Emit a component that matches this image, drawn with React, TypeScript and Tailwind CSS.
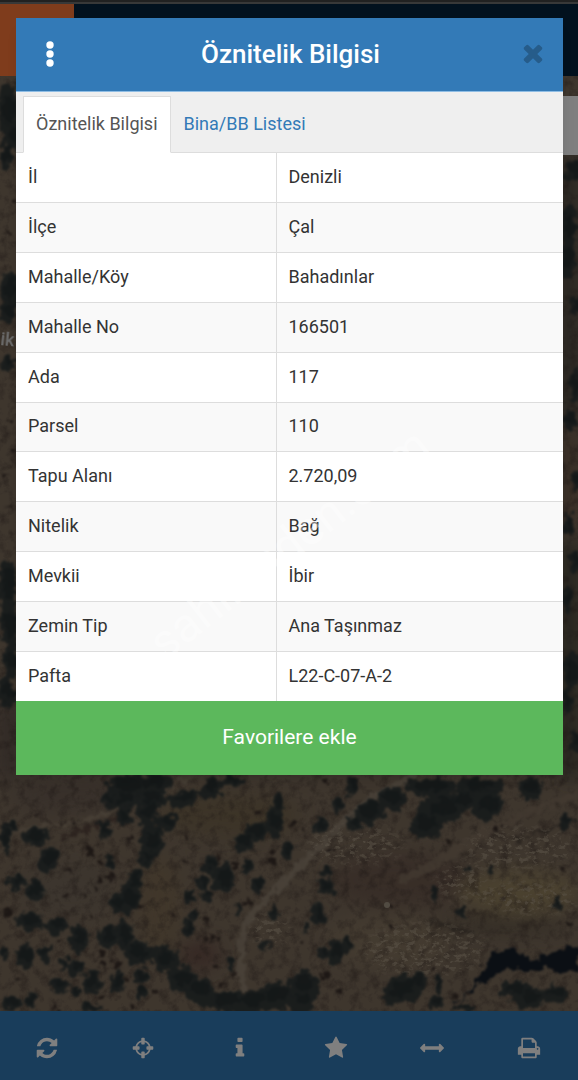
import React, { useState } from 'react';

const ROWS: [string, string][] = [
  ['İl', 'Denizli'],
  ['İlçe', 'Çal'],
  ['Mahalle/Köy', 'Bahadınlar'],
  ['Mahalle No', '166501'],
  ['Ada', '117'],
  ['Parsel', '110'],
  ['Tapu Alanı', '2.720,09'],
  ['Nitelik', 'Bağ'],
  ['Mevkii', 'İbir'],
  ['Zemin Tip', 'Ana Taşınmaz'],
  ['Pafta', 'L22-C-07-A-2'],
];

const TABS = ['Öznitelik Bilgisi', 'Bina/BB Listesi'];

const TOOLS = [
  {
    label: 'Yenile',
    d: 'M1639 1056q0 5-1 7-64 268-268 434.5t-478 166.5q-146 0-282.5-55t-243.5-157l-129 129q-19 19-45 19t-45-19-19-45v-448q0-26 19-45t45-19h448q26 0 45 19t19 45-19 45l-137 137q71 66 161 102t187 36q134 0 250-65t186-179q11-17 53-117 8-23 30-23h192q13 0 22.5 9.5t9.5 22.5zm25-800v448q0 26-19 45t-45 19h-448q-26 0-45-19t-19-45 19-45l138-138q-148-137-349-137-134 0-250 65t-186 179q-11 17-53 117-8 23-30 23h-199q-13 0-22.5-9.5t-9.5-22.5v-7q65-268 270-434.5t480-166.5q146 0 284 55.5t245 156.5l130-129q19-19 45-19t45 19 19 45z',
  },
  {
    label: 'Konum',
    d: 'M1325 1024h-109q-26 0-45-19t-19-45v-128q0-26 19-45t45-19h109q-32-108-112.5-188.5t-188.5-112.5v109q0 26-19 45t-45 19h-128q-26 0-45-19t-19-45v-109q-108 32-188.5 112.5t-112.5 188.5h109q26 0 45 19t19 45v128q0 26-19 45t-45 19h-109q32 108 112.5 188.5t188.5 112.5v-109q0-26 19-45t45-19h128q26 0 45 19t19 45v109q108-32 188.5-112.5t112.5-188.5zm339-192v128q0 26-19 45t-45 19h-143q-37 161-154.5 278.5t-278.5 154.5v143q0 26-19 45t-45 19h-128q-26 0-45-19t-19-45v-143q-161-37-278.5-154.5t-154.5-278.5h-143q-26 0-45-19t-19-45v-128q0-26 19-45t45-19h143q37-161 154.5-278.5t278.5-154.5v-143q0-26 19-45t45-19h128q26 0 45 19t19 45v143q161 37 278.5 154.5t154.5 278.5h143q26 0 45 19t19 45z',
  },
  {
    label: 'Bilgi',
    d: 'M1216 1344v128q0 26-19 45t-45 19h-512q-26 0-45-19t-19-45v-128q0-26 19-45t45-19h64v-384h-64q-26 0-45-19t-19-45v-128q0-26 19-45t45-19h384q26 0 45 19t19 45v576h64q26 0 45 19t19 45zm-128-1152v192q0 26-19 45t-45 19h-256q-26 0-45-19t-19-45v-192q0-26 19-45t45-19h256q26 0 45 19t19 45z',
  },
  {
    label: 'Favoriler',
    d: 'M1728 647q0 22-26 48l-363 354 86 500q1 7 1 20 0 21-10.5 35.5t-30.5 14.5q-19 0-40-12l-449-236-449 236q-22 12-40 12-21 0-31.5-14.5t-10.5-35.5q0-6 2-20l86-500-364-354q-25-27-25-48 0-37 56-46l502-73 225-455q19-41 49-41t49 41l225 455 502 73q56 9 56 46z',
  },
  {
    label: 'Ölçüm',
    d: 'M1792 896q0 26-19 45l-256 256q-19 19-45 19t-45-19-19-45v-128h-1024v128q0 26-19 45t-45 19-45-19l-256-256q-19-19-19-45t19-45l256-256q19-19 45-19t45 19 19 45v128h1024v-128q0-26 19-45t45-19 45 19l256 256q19 19 19 45z',
  },
  {
    label: 'Yazdır',
    d: 'M448 1536h896v-256h-896v256zm0-640h896v-384h-160q-40 0-68-28t-28-68v-160h-640v640zm1152 64q0-26-19-45t-45-19-45 19-19 45 19 45 45 19 45-19 19-45zm128 0v416q0 13-9.5 22.5t-22.5 9.5h-224v160q0 40-28 68t-68 28h-960q-40 0-68-28t-28-68v-160h-224q-13 0-22.5-9.5t-9.5-22.5v-416q0-79 56.5-135.5t135.5-56.5h64v-544q0-40 28-68t68-28h672q40 0 88 20t76 48l152 152q28 28 48 76t20 88v256h64q79 0 135.5 56.5t56.5 135.5z',
  },
];

// Tree crowns: cx, cy, rx, ry, rotation
const TREES: number[][] = [
  [125, 786, 22, 12, 0], [150, 782, 20, 10, 0], [106, 800, 6, 8, 0], [182, 798, 17, 9, -15], [210, 788, 12, 9, -20], [232, 780, 10, 6, 0],
  [122, 800, 14, 8, 0], [150, 798, 16, 10, 0],
  [122, 816, 7, 9, 0], [146, 812, 10, 15, 10], [165, 821, 11, 9, 0], [103, 830, 6, 11, -20], [150, 840, 12, 17, 10], [145, 858, 9, 10, 0],
  [47, 858, 10, 15, 15], [34, 836, 14, 9, 0], [4, 838, 5, 15, 0], [8, 825, 6, 5, 0], [14, 882, 10, 9, 0], [33, 890, 9, 11, 0],
  [133, 880, 9, 13, 10], [126, 898, 12, 15, 15], [115, 903, 6, 10, 0], [28, 920, 15, 9, 5], [55, 925, 12, 8, 0], [77, 938, 11, 13, 0],
  [106, 936, 10, 12, 0], [122, 934, 9, 16, 0], [137, 952, 15, 12, 10], [163, 958, 13, 13, 0], [180, 978, 14, 14, 0], [198, 990, 15, 14, 0],
  [24, 955, 9, 13, 0], [43, 952, 6, 8, 0], [3, 952, 4, 8, 0], [57, 984, 10, 9, 0], [75, 968, 9, 8, 0], [90, 982, 9, 12, 0], [73, 991, 6, 5, 0],
  [62, 963, 5, 7, 0], [139, 976, 8, 7, 0], [116, 982, 6, 10, 0], [140, 991, 6, 6, 0], [9, 1002, 9, 7, 0], [28, 1000, 6, 9, 0], [90, 1007, 11, 5, 0],
  [243, 842, 11, 9, -20], [254, 832, 11, 10, -30], [272, 821, 9, 14, 10], [276, 803, 6, 10, 0], [286, 850, 6, 9, 0], [209, 864, 7, 11, 0],
  [222, 877, 11, 14, 10], [201, 881, 6, 7, 0], [189, 896, 5, 7, 0], [205, 895, 7, 7, 0], [187, 928, 7, 10, 10], [191, 914, 4, 5, 0],
  [246, 866, 6, 6, 0], [256, 885, 6, 8, 0], [272, 910, 4, 8, 0], [237, 907, 4, 6, 0], [262, 943, 6, 5, 0], [228, 962, 4, 8, 0],
  [225, 1001, 20, 10, 0], [250, 1001, 22, 12, 0], [275, 995, 20, 13, 0], [302, 984, 16, 14, 0], [300, 1001, 14, 12, 0], [108, 862, 5, 7, 0],
  [350, 785, 5, 11, 0], [336, 804, 5, 9, 0], [318, 824, 7, 7, 0], [390, 798, 14, 12, -10], [368, 812, 17, 12, -15], [352, 822, 10, 7, 0],
  [428, 786, 26, 10, 0], [440, 808, 24, 15, -10], [424, 824, 16, 14, 0], [478, 786, 24, 10, 0], [485, 804, 17, 14, 0], [528, 787, 12, 12, 0], [460, 800, 14, 12, 0],
  [563, 821, 7, 7, 0], [324, 886, 10, 8, 20], [317, 913, 6, 12, 0], [304, 925, 4, 6, 0], [334, 952, 8, 14, 0], [322, 951, 5, 8, 0],
  [345, 944, 6, 6, 0], [402, 988, 18, 14, 0], [415, 980, 10, 9, 0], [392, 994, 12, 10, 0], [437, 983, 4, 9, 0], [434, 1000, 8, 7, 0], [463, 1006, 12, 4, 0],
  [512, 989, 14, 10, 0], [527, 997, 16, 11, 0], [552, 993, 14, 9, 0],
  [490, 868, 4, 6, 0], [467, 867, 3, 5, 0], [432, 893, 3, 7, 0], [556, 903, 6, 6, 0], [460, 912, 4, 5, 0], [325, 870, 6, 6, 0],
  [6, 110, 10, 28, 0], [12, 135, 9, 14, 0], [4, 155, 6, 14, 0], [8, 290, 9, 20, 0], [5, 310, 8, 12, 0], [6, 362, 8, 8, 0],
  [5, 585, 9, 26, 0], [7, 625, 9, 24, 0], [9, 660, 8, 18, 0], [3, 690, 7, 18, 0], [10, 695, 5, 9, 0],
  [572, 170, 9, 10, 0], [567, 225, 7, 24, 0], [565, 260, 8, 20, 0], [574, 305, 7, 9, 0], [573, 385, 6, 18, 0], [568, 420, 6, 10, 0],
  [574, 480, 5, 12, 0], [567, 525, 5, 14, 0], [573, 562, 7, 10, 0], [566, 600, 5, 14, 0], [570, 670, 9, 18, 0], [565, 700, 6, 14, 0], [573, 740, 6, 12, 0],
];

// Small bushes: cx, cy, r
const BUSHES: number[][] = [
  [71, 821, 3], [61, 821, 2], [88, 850, 4], [97, 860, 3], [65, 871, 2], [96, 880, 3], [104, 876, 2], [109, 877, 3], [126, 838, 3], [126, 860, 2],
  [92, 887, 3], [80, 894, 2], [89, 916, 2], [64, 894, 2], [98, 952, 3], [101, 964, 3], [115, 966, 4], [125, 978, 3], [139, 905, 3], [178, 942, 2],
  [185, 837, 2], [189, 820, 2], [182, 862, 2], [218, 857, 3], [203, 921, 3], [202, 939, 2], [210, 938, 3], [219, 937, 2], [230, 936, 2], [234, 866, 3],
  [245, 900, 3], [267, 852, 3], [271, 861, 4], [257, 812, 2], [221, 984, 2], [232, 973, 3], [214, 966, 2], [325, 781, 3], [300, 828, 2], [291, 825, 3],
  [330, 850, 3], [292, 918, 2], [388, 904, 3], [389, 926, 3], [416, 867, 2], [471, 911, 2], [500, 898, 2], [539, 897, 2], [567, 921, 3], [301, 942, 2],
  [323, 975, 3], [337, 990, 4], [431, 968, 2], [451, 998, 3], [467, 994, 2], [495, 828, 3], [446, 841, 4], [57, 941, 3], [52, 1006, 3], [100, 995, 4],
  [131, 1006, 3], [153, 992, 3], [170, 915, 2], [6, 911, 5], [16, 979, 3], [37, 812, 2], [560, 868, 3], [12, 200, 2], [7, 230, 2], [7, 420, 2], [12, 450, 2], [5, 475, 2], [8, 505, 2],
];

function Aerial() {
  return (
    <svg
      aria-hidden="true"
      className="absolute inset-0 h-full w-full"
      viewBox="0 76 578 935"
      preserveAspectRatio="xMidYMax slice"
    >
      <defs>
        <filter id="rough" x="-5%" y="-5%" width="110%" height="110%" colorInterpolationFilters="sRGB">
          <feTurbulence type="fractalNoise" baseFrequency="0.12" numOctaves="4" seed="4" result="n" />
          <feDisplacementMap in="SourceGraphic" in2="n" scale="14" xChannelSelector="R" yChannelSelector="G" />
          <feGaussianBlur stdDeviation="0.9" />
        </filter>
        <filter id="soft">
          <feGaussianBlur stdDeviation="9" />
        </filter>
        <filter id="grain" x="0" y="0" width="100%" height="100%" colorInterpolationFilters="sRGB">
          <feTurbulence type="fractalNoise" baseFrequency="0.1" numOctaves="5" seed="9" />
          <feColorMatrix values="0 0 0 0 0.24  0 0 0 0 0.19  0 0 0 0 0.17  2.4 0 0 0 -1.05" />
        </filter>
        <filter id="stones" x="-10%" y="-20%" width="120%" height="140%" colorInterpolationFilters="sRGB">
          <feTurbulence type="fractalNoise" baseFrequency="0.16 0.24" numOctaves="4" seed="21" />
          <feColorMatrix values="0 0 0 0 0.7  0 0 0 0 0.64  0 0 0 0 0.55  0 7 0 0 -3.7" result="s" />
          <feGaussianBlur in="SourceGraphic" stdDeviation="6" result="m" />
          <feComposite in="s" in2="m" operator="in" />
          <feGaussianBlur stdDeviation="0.6" />
        </filter>
      </defs>

      <rect y="76" width="578" height="935" fill="#7c6c5b" />

      {/* soil tones */}
      <g filter="url(#soft)">
        <ellipse cx="70" cy="795" rx="60" ry="18" fill="#6f6055" />
        <ellipse cx="230" cy="815" rx="70" ry="22" fill="#78674f" />
        <ellipse cx="160" cy="905" rx="22" ry="50" fill="#806d54" />
        <ellipse cx="70" cy="890" rx="50" ry="30" fill="#786a5b" />
        <ellipse cx="400" cy="880" rx="70" ry="28" fill="#705c4f" />
        <ellipse cx="520" cy="892" rx="60" ry="22" fill="#94825f" />
        <ellipse cx="390" cy="940" rx="60" ry="26" fill="#877661" />
        <ellipse cx="500" cy="925" rx="70" ry="8" fill="#655948" />
        <ellipse cx="200" cy="955" rx="20" ry="14" fill="#6a5046" />
        <rect x="0" y="700" width="16" height="80" fill="#5a4e46" />
        <rect x="562" y="155" width="16" height="270" fill="#46443c" />
        <rect x="562" y="432" width="16" height="90" fill="#6e5847" />
        <rect x="562" y="540" width="16" height="240" fill="#413f36" />
      </g>

      <rect y="76" width="578" height="935" filter="url(#grain)" opacity="0.5" />

      {/* dirt tracks */}
      <g filter="url(#rough)" fill="none" strokeLinecap="round" opacity="0.8">
        <path d="M2 831 Q62 827 97 816 T187 780" stroke="#93836f" strokeWidth="3" />
        <path d="M62 838 Q92 828 120 816" stroke="#523f38" strokeWidth="3" />
        <path d="M415 775 L362 804 L302 864 L252 914 Q236 937 244 987" stroke="#968775" strokeWidth="7" />
        <path d="M580 794 L537 808 L482 835 L442 860 L402 880" stroke="#857361" strokeWidth="9" />
        <path d="M567 824 L512 840" stroke="#4c4239" strokeWidth="3" />
        <path d="M432 922 Q452 927 472 932" stroke="#4c4239" strokeWidth="4" />
      </g>

      <g filter="url(#stones)" fill="#fff" opacity="0.6">
        <ellipse cx="355" cy="845" rx="48" ry="18" />
        <ellipse cx="520" cy="848" rx="54" ry="20" />
        <ellipse cx="462" cy="882" rx="24" ry="18" />
        <ellipse cx="425" cy="950" rx="60" ry="26" />
        <ellipse cx="530" cy="898" rx="50" ry="16" />
        <ellipse cx="270" cy="930" rx="20" ry="14" />
      </g>

      <g filter="url(#rough)">
        <g fill="#2f3737" opacity="0.92">
          {TREES.map(([x, y, rx, ry, rot], i) => (
            <ellipse key={i} cx={x + 2} cy={y + 1} rx={rx} ry={ry} transform={`rotate(${rot} ${x} ${y})`} />
          ))}
        </g>
        {/* shaded cores */}
        <g fill="#1d262a" opacity="0.45">
          {TREES.map(([x, y, rx, ry, rot], i) => (
            <ellipse key={i} cx={x + 3} cy={y - 1} rx={rx * 0.6} ry={ry * 0.55} transform={`rotate(${rot} ${x} ${y})`} />
          ))}
        </g>
        <g fill="#3a2f2a">
          {BUSHES.map(([x, y, r], i) => (
            <circle key={i} cx={x + 2} cy={y + 1} r={r} />
          ))}
        </g>
        <path d="M454 1006 Q480 982 490 952 L512 948 L532 960 L580 944 V972 L542 968 L504 970 L480 984 Z" fill="#161e28" />
      </g>
      <circle cx="387" cy="905" r="3" fill="#a39684" />
      <text x="0" y="345" fill="#d8d8d8" className="font-['Roboto'] text-[18px] font-medium" transform="rotate(6 0 345)">
        ik
      </text>
    </svg>
  );
}

export default function App() {
  const [tab, setTab] = useState(0);

  return (
    <div className="relative flex min-h-screen flex-col overflow-hidden bg-[#424242] font-['Roboto',sans-serif]">
      {/* Map page */}
      <header className="mt-[2px] flex h-[74px] border-t-2 border-[#707070] bg-[#04223c]">
        <div className="w-[74px] bg-[#ff7838]" />
      </header>
      <main className="relative flex-1 overflow-hidden">
        <Aerial />
        <div className="absolute top-5 right-0 h-[59px] w-10 bg-white" />
      </main>
      <nav className="grid h-[69px] grid-cols-6 bg-[#337ab7]">
        {TOOLS.map((tool) => (
          <button key={tool.label} type="button" aria-label={tool.label} className="flex items-center justify-center pt-1 pr-0.5">
            <svg viewBox="0 0 1792 1792" className="h-6 w-6 fill-white">
              <path d={tool.d} />
            </svg>
          </button>
        ))}
      </nav>

      {/* Dialog */}
      <div className="absolute inset-0 bg-black/50 pt-[18px] pr-[15px] pl-4">
        <section role="dialog" aria-labelledby="dialog-title" className="relative bg-white shadow-lg">
          <header className="flex h-[74px] items-center justify-between border-b border-[#8fbde4] bg-[#337ab7] pr-2.5 pl-4 text-white">
            <button type="button" aria-label="Menü" className="flex w-9 justify-center">
              <svg viewBox="0 0 8 28" className="h-7 w-2 fill-white">
                <circle cx="4" cy="4" r="3.7" />
                <circle cx="4" cy="13" r="3.7" />
                <circle cx="4" cy="22" r="3.7" />
              </svg>
            </button>
            <h1 id="dialog-title" className="text-[26px] font-medium">Öznitelik Bilgisi</h1>
            <button type="button" aria-label="Kapat" className="flex w-10 justify-center pb-1">
              <svg viewBox="0 0 1792 1792" className="h-7 w-7 fill-[#265c8a]">
                <path d="M1490 1322q0 40-28 68l-136 136q-28 28-68 28t-68-28l-294-294-294 294q-28 28-68 28t-68-28l-136-136q-28-28-28-68t28-68l294-294-294-294q-28-28-28-68t28-68l136-136q28-28 68-28t68 28l294 294 294-294q28-28 68-28t68 28l136 136q28 28 28 68t-28 68l-294 294 294 294q28 28 28 68z" />
              </svg>
            </button>
          </header>

          <div role="tablist" className="flex h-[61px] items-end border-b border-[#dddddd] bg-[#efefef] px-[7px]">
            {TABS.map((name, i) => (
              <button
                key={name}
                type="button"
                role="tab"
                aria-selected={tab === i}
                onClick={() => setTab(i)}
                className={`-mb-px h-[57px] border px-3 pb-0.5 text-[18px] ${
                  tab === i
                    ? 'border-[#dddddd] border-b-white bg-white text-[#555555]'
                    : 'border-transparent text-[#337ab7]'
                }`}
              >
                {name}
              </button>
            ))}
          </div>

          <table className="h-[548px] w-full table-fixed border-collapse text-left text-[18px] text-[#333333]">
            <tbody>
              {ROWS.map(([name, value]) => (
                <tr key={name} className="border-b border-[#dddddd] odd:bg-white even:bg-[#f9f9f9] last:border-b-0">
                  <th scope="row" className="w-[260px] border-r border-[#dddddd] px-3 pb-0.5 font-normal">{name}</th>
                  <td className="px-3 pb-0.5">{value}</td>
                </tr>
              ))}
            </tbody>
          </table>

          <button type="button" className="block h-[74px] w-full bg-[#5cb85c] text-[21px] text-white">
            Favorilere ekle
          </button>

          {/* Watermark across the table */}
          <div aria-hidden="true" className="pointer-events-none absolute inset-x-0 top-[502px] flex justify-center">
            <span className="-rotate-[38deg] text-5xl leading-none text-white/40">sahibinden.com</span>
          </div>
        </section>
      </div>
    </div>
  );
}
